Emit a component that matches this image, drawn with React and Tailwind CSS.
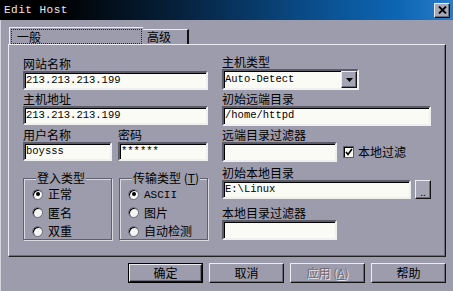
import React from 'react'

const cjk = { fontFamily: '"Noto Sans CJK SC", "Noto Sans", sans-serif' }
const mono = { fontFamily: '"Liberation Mono", "DejaVu Sans Mono", monospace' }

const sunken =
  'border-2 border-t-[#5c5c68] border-l-[#5c5c68] border-b-[#f0f0f0] border-r-[#f0f0f0] shadow-[inset_1px_1px_0_#000] bg-[#fbfbf6]'
const raised =
  'border border-t-[#ececf2] border-l-[#ececf2] border-b-[#111] border-r-[#111] shadow-[inset_-1px_-1px_0_#6c6c7a]'

function Label({ children }) {
  return <div className="h-[14px] leading-[14px] text-[12px] text-black whitespace-nowrap">{children}</div>
}

function Field({ value, className = '' }) {
  return (
    <div className={`${sunken} ${className} flex items-center pl-[1px] text-[10.5px] text-black overflow-hidden`} style={mono}>
      {value}
    </div>
  )
}

function Radio({ checked, label }) {
  return (
    <div className="flex items-center h-[18.5px] gap-[5px]">
      <div className="w-[11px] h-[11px] rounded-full bg-[#f4f4f4] border border-[#6a6a76] shadow-[inset_1px_1px_0_#000] flex items-center justify-center">
        {checked && <div className="w-[4px] h-[4px] rounded-full bg-black" />}
      </div>
      <span className="text-[12px] leading-[14px] text-black">{label}</span>
    </div>
  )
}

function GroupBox({ title, children }) {
  return (
    <div className="relative w-[89px] h-[62px] border border-[#5e5e6c] shadow-[1px_1px_0_#dadae2,inset_1px_1px_0_#dadae2] pl-[8px] pt-[6px]">
      <div className="absolute -top-[8px] left-[12px] px-[1px] bg-[#9c9cad] text-[12px] leading-[14px] whitespace-nowrap text-black">
        {title}
      </div>
      {children}
    </div>
  )
}

function Button({ children, def, disabled }) {
  return (
    <div
      className={`w-[75px] h-[20px] flex items-center justify-center text-[12px] ${
        def ? 'border border-black' : ''
      }`}
    >
      <div className={`w-full h-full ${raised} flex items-center justify-center`}>
        <span className={disabled ? 'text-[#6c6c7a] [text-shadow:1px_1px_0_#e8e8ee]' : 'text-black'}>{children}</span>
      </div>
    </div>
  )
}

export default function App() {
  return (
    <div className="w-[453px] h-[291px] bg-[#9c9cad] flex flex-col overflow-hidden" style={cjk}>
      {/* title bar */}
      <div className="h-[20px] flex items-center justify-between pl-[4px] pr-[3px] bg-[linear-gradient(to_right,#000_12%,#06223e_40%,#0a4f8e_70%,#0d66b4_88%,#2a7cc6)]">
        <span className="text-[11px] text-[#f4e6e0] tracking-[0.5px]" style={mono}>
          Edit Host
        </span>
        <div className={`w-[16px] h-[15px] bg-[#a8a8b8] ${raised} flex items-center justify-center`}>
          <svg width="9" height="8" viewBox="0 0 9 8">
            <path d="M1 0.5L8 7.5M8 0.5L1 7.5" stroke="#000" strokeWidth="1.8" />
          </svg>
        </div>
      </div>

      <div className="flex-1 border-l border-[#d4d4de] flex flex-col">
        {/* tabs */}
        <div className="flex items-end pl-[8px] pt-[7px] h-[24px]">
          <div className="w-[134px] h-[17px] border-t border-l border-[#ececf2] pt-[1px] pl-[1px] pr-[1px]">
            <div className="h-[15px] border border-dotted border-[#222] flex items-center pl-[5px] text-[12px] text-black">一般</div>
          </div>
          <div className="w-[46px] h-[15px] border-t border-[#ececf2] border-r-2 border-r-[#111] flex items-center pl-[4px] text-[12px] text-black">
            高级
          </div>
        </div>

        {/* panel */}
        <div className="ml-[7px] w-[438px] h-[213px] border-t border-l border-[#ececf2] border-r border-r-[#111] border-b border-b-[#222] shadow-[inset_-1px_-1px_0_#6c6c7a] flex pl-[14px]">
          {/* left column */}
          <div className="w-[185px] pt-[12px] flex flex-col">
            <Label>网站名称</Label>
            <Field value="213.213.213.199" className="h-[19px] w-full" />
            <div className="mt-[2px]">
              <Label>主机地址</Label>
            </div>
            <Field value="213.213.213.199" className="h-[19px] w-full" />
            <div className="mt-[3px] flex gap-[6px]">
              <div className="w-[89px]">
                <Label>用户名称</Label>
                <Field value="boysss" className="h-[19px] w-full" />
              </div>
              <div className="w-[90px]">
                <Label>密码</Label>
                <Field value="******" className="h-[19px] w-full" />
              </div>
            </div>
            <div className="mt-[17px] flex gap-[7px]">
              <GroupBox title="登入类型">
                <Radio checked label="正常" />
                <Radio label="匿名" />
                <Radio label="双重" />
              </GroupBox>
              <GroupBox
                title={
                  <span>
                    传输类型 (<span className="underline">T</span>)
                  </span>
                }
              >
                <Radio checked label={<span style={mono} className="text-[11px]">ASCII</span>} />
                <Radio label="图片" />
                <Radio label="自动检测" />
              </GroupBox>
            </div>
          </div>

          {/* right column */}
          <div className="ml-[14px] w-[209px] pt-[10px] flex flex-col">
            <Label>主机类型</Label>
            <div className={`${sunken} h-[21px] w-[137px] flex`}>
              <div className="flex-1 flex items-center pl-[1px] text-[10.5px] text-black" style={mono}>
                Auto-Detect
              </div>
              <div className={`w-[16px] h-full bg-[#a4a4b4] ${raised} flex items-center justify-center`}>
                <svg width="7" height="4" viewBox="0 0 7 4">
                  <path d="M0 0H7L3.5 4Z" fill="#000" />
                </svg>
              </div>
            </div>
            <div className="mt-[2px]">
              <Label>初始远端目录</Label>
            </div>
            <Field value="/home/httpd" className="h-[20px] w-[209px]" />
            <div className="mt-[2px]">
              <Label>远端目录过滤器</Label>
            </div>
            <div className="flex items-center h-[20px]">
              <Field value="" className="h-[20px] w-[115px]" />
              <div className="ml-[6px] w-[11px] h-[12px] bg-[#f8f8f4] border border-[#5c5c68] shadow-[inset_1px_1px_0_#000] flex items-center justify-center">
                <svg width="8" height="8" viewBox="0 0 8 8">
                  <path d="M1 4L3 6.5L7 1" stroke="#000" strokeWidth="1.6" fill="none" />
                </svg>
              </div>
              <span className="ml-[4px] text-[12px] text-black">本地过滤</span>
            </div>
            <div className="mt-[4px]">
              <Label>初始本地目录</Label>
            </div>
            <div className="flex h-[19px]">
              <Field value="E:\Linux" className="h-[19px] w-[190px]" />
              <div className={`ml-[4px] w-[16px] h-[19px] bg-[#a4a4b4] ${raised} flex items-end justify-center text-[10px] leading-[12px] text-black`}>
                ..
              </div>
            </div>
            <div className="mt-[7px]">
              <Label>本地目录过滤器</Label>
            </div>
            <Field value="" className="h-[20px] w-[115px]" />
          </div>
        </div>

        {/* buttons */}
        <div className="mt-[6px] pl-[127px] flex gap-[6px]">
          <Button def>确定</Button>
          <Button>取消</Button>
          <Button disabled>
            应用 (<span className="underline">A</span>)
          </Button>
          <Button>帮助</Button>
        </div>
      </div>
    </div>
  )
}
